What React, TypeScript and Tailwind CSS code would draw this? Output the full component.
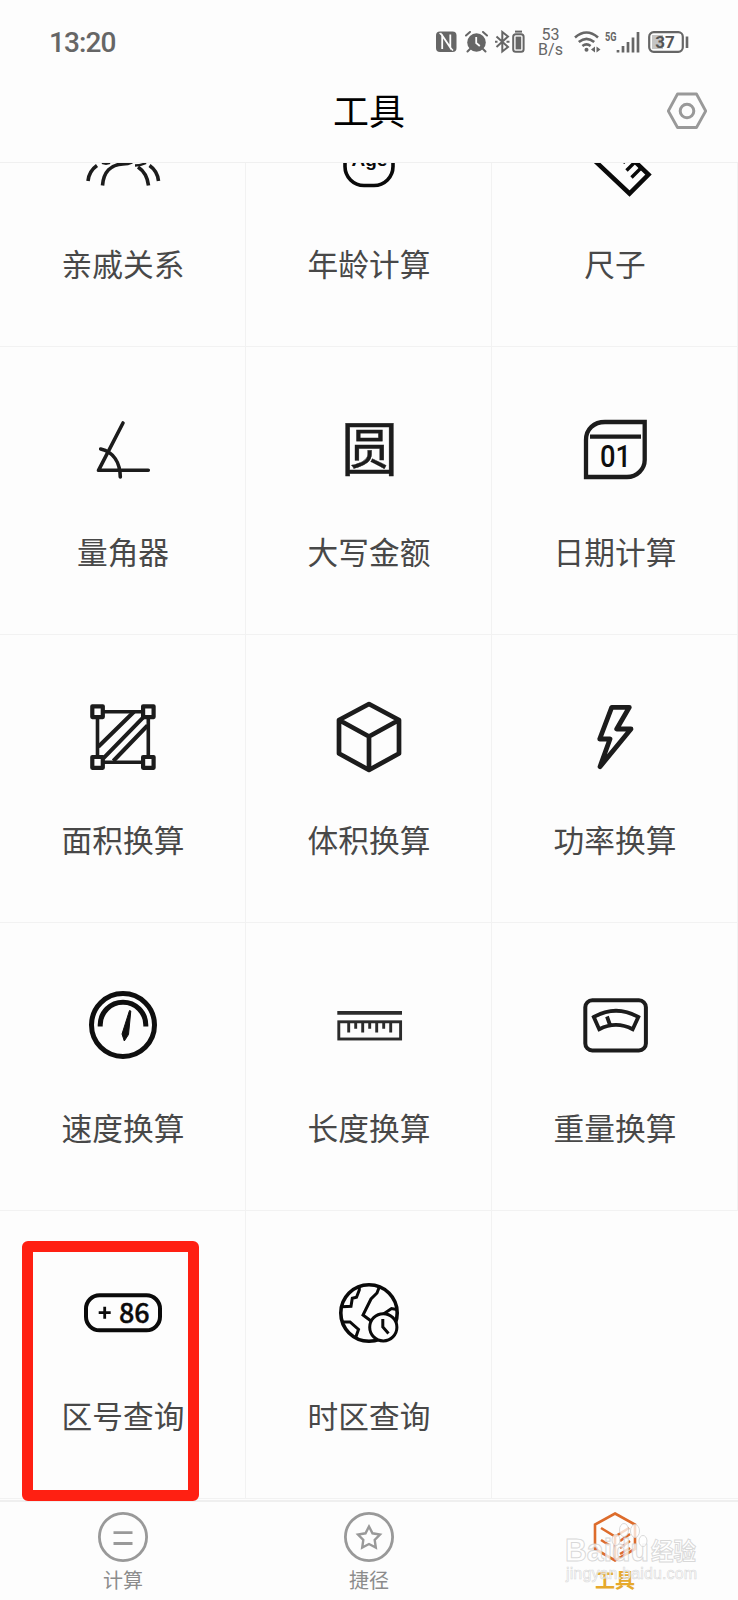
import type { ReactNode } from 'react';

const SANS = "font-['Roboto','Noto_Sans_CJK_SC',sans-serif]";

function Icon({ children, color = '#1c1c1c', width = 4 }: { children: ReactNode; color?: string; width?: number }) {
  return (
    <svg width="90" height="90" viewBox="0 0 90 90" fill="none" stroke={color} strokeWidth={width}>
      {children}
    </svg>
  );
}

const FamilyIcon = () => (
  <Icon width={3.6}>
    <path d="M10 64 Q11 54 19 48.5 M80.5 64 Q79.5 54 71.5 48.5" />
    <path d="M24.5 68.5 C25.5 55 33 47.5 45 47 Q50 47 54 45 M70.5 68.5 Q69 56 60 50" />
    <path d="M24 46 q4 1.5 8 0 M57 48.5 q6 0 11-2.5" strokeWidth="2.4" />
  </Icon>
);

const AgeIcon = () => (
  <Icon color="#0a0a0a" width={3.6}>
    <rect x="21" y="20" width="48" height="48.5" rx="19" />
    <text x="45.5" y="49" textAnchor="middle" fill="#0a0a0a" stroke="none" className="font-['Liberation_Sans',sans-serif] text-[19px] font-bold">
      Age
    </text>
  </Icon>
);

const SetSquareIcon = () => (
  <Icon color="#0a0a0a" width={4.5}>
    <path d="M15 34.5 L59.5 76.5 L78.5 57.5 L56 36" />
    <path d="M71.5 50.5 L61.5 60.5 M65.5 44.5 L56.5 53.5 M59 39 L53 46" strokeWidth="3.4" />
  </Icon>
);

const AngleIcon = () => (
  <Icon width={3.6}>
    <path d="M45 18 L20.5 65.3 H70.3 M22.7 44 C36 47 42 58 42.3 72" strokeLinecap="round" strokeLinejoin="round" />
  </Icon>
);

const YuanIcon = () => (
  <Icon>
    <text x="17" y="66" textLength="57" lengthAdjust="spacingAndGlyphs" fill="#1c1c1c" stroke="#1c1c1c" strokeWidth="0.4" className="font-['Noto_Sans_CJK_SC',sans-serif] text-[59px]">
      圆
    </text>
  </Icon>
);

const DateIcon = () => (
  <Icon width={4.3}>
    <path d="M16 72 V35 C16 24 24 17 35 17 H74.7 V55 C74.7 64 67 72 57 72 Z" />
    <path d="M20 31.7 H71" />
    <text x="45.5" y="61.5" textAnchor="middle" textLength="31" lengthAdjust="spacingAndGlyphs" fill="#0f0f0f" stroke="none" className="font-['Roboto',sans-serif] text-[31px] font-medium">
      01
    </text>
  </Icon>
);

const AreaIcon = () => (
  <Icon width={3.6}>
    <path d="M26 18.7 H64 M26 69.3 H64 M19.5 25 V63 M70.3 25 V63" />
    <path d="M20.3 53.7 L56 18.7 M25.3 65.3 L66 23.7 M35.3 68 L69.5 32.5" strokeWidth="4" />
    <g strokeWidth="4.2" strokeLinejoin="round">
      <rect x="14.3" y="13.3" width="10.5" height="10.8" />
      <rect x="65.1" y="13.3" width="10.5" height="10.8" />
      <rect x="14.3" y="64" width="10.5" height="10.8" />
      <rect x="65.1" y="64" width="10.5" height="10.8" />
    </g>
  </Icon>
);

const CubeIcon = () => (
  <Icon width={4.7}>
    <path d="M45 11 L75 27 V60.5 L45 77 L15 60.5 V27 Z M15 27 L45 43.5 L75 27 M45 43.5 V77" strokeLinejoin="round" />
  </Icon>
);

const BoltIcon = () => (
  <Icon width={4.8}>
    <path d="M41.7 14.3 H59.3 L46.7 36 H61 L30 73.7 L40 46 H29.7 Z" strokeLinejoin="round" />
  </Icon>
);

const SpeedIcon = () => (
  <Icon color="#0f0f0f" width={5}>
    <circle cx="45" cy="44" r="31.5" />
    <path d="M22.2 45.5 V44 A22.8 22.8 0 0 1 67.8 44 V45.5" />
    <path d="M51.5 29.5 L44 53 L46.3 60 L50.5 53.5 L52.8 30 Z" fill="#0f0f0f" strokeWidth="1" />
  </Icon>
);

const LengthIcon = () => (
  <Icon color="#2b2b2b" width={2.9}>
    <path d="M13.3 31.8 H78" strokeWidth="3.8" />
    <rect x="14.8" y="40.8" width="61.8" height="17.2" />
    <path d="M24.7 41 V51.5 M31.7 41 V47.7 M38.7 41 V51.5 M45.7 41 V47.7 M52.7 41 V51.5 M59.7 41 V47.7 M66.7 41 V51.5" />
  </Icon>
);

const WeightIcon = () => (
  <Icon>
    <rect x="15.3" y="19.3" width="60.6" height="50.2" rx="7" />
    <path d="M23.8 36 Q46 23.5 68.3 36 L62.7 48.2 Q46 39.5 29.2 48.2 Z M37 35.5 L40 44" strokeWidth="3.8" />
  </Icon>
);

const AreaCodeIcon = () => (
  <Icon color="#0a0a0a">
    <rect x="8" y="26.3" width="74" height="35" rx="13.5" />
    <path d="M20.7 43.7 H32.7 M26.7 37.7 V49.7" strokeWidth="2.8" />
    <text x="56.3" y="54" textAnchor="middle" fill="#0a0a0a" stroke="#0a0a0a" strokeWidth="0.4" className="font-['Noto_Sans_CJK_SC',sans-serif] text-[27px] font-medium">
      86
    </text>
  </Icon>
);

const TimeZoneIcon = () => (
  <Icon color="#0a0a0a" width={3}>
    <circle cx="45" cy="44" r="28.2" strokeWidth="3.6" />
    <path d="M35.3 17 V21 L32.5 28.3 L28.3 29.3 L27 37.3 L18 37.8 M18 53 H26 L34.5 60.5 L31.5 69" />
    <path d="M55.3 18 L53 24 L47 30 L39 46 L47 52 M58 46 L67.5 39.5 L73 40.5" />
    <circle cx="59.3" cy="58.3" r="13.6" fill="#fdfdfd" />
    <path d="M58.8 50 V58 L64.5 64.5" />
  </Icon>
);

const tools = [
  { label: '亲戚关系', icon: <FamilyIcon /> },
  { label: '年龄计算', icon: <AgeIcon /> },
  { label: '尺子', icon: <SetSquareIcon /> },
  { label: '量角器', icon: <AngleIcon /> },
  { label: '大写金额', icon: <YuanIcon /> },
  { label: '日期计算', icon: <DateIcon /> },
  { label: '面积换算', icon: <AreaIcon /> },
  { label: '体积换算', icon: <CubeIcon /> },
  { label: '功率换算', icon: <BoltIcon /> },
  { label: '速度换算', icon: <SpeedIcon /> },
  { label: '长度换算', icon: <LengthIcon /> },
  { label: '重量换算', icon: <WeightIcon /> },
  { label: '区号查询', icon: <AreaCodeIcon /> },
  { label: '时区查询', icon: <TimeZoneIcon /> },
  { label: '', icon: null },
];

function StatusBar() {
  return (
    <div className="flex h-[84px] items-center pr-[49px] pl-[49px] text-[#666]">
      <span className="pt-[2px] text-[28px] leading-none font-medium tracking-[-0.9px]">13:20</span>

      <div className="ml-auto flex items-center">
        {/* NFC */}
        <svg width="21" height="22" viewBox="0 0 21 22" className="mr-[8px]">
          <rect x="0" y="0.5" width="20.5" height="20.5" rx="4" fill="#666" />
          <path d="M6.2 18 V4.5 L14.3 16.5 V3.5" fill="none" stroke="#fdfdfd" strokeWidth="1.8" />
          <path d="M3.6 2 L6.2 4.5 M14.3 16.5 L17 19.5" stroke="#fdfdfd" strokeWidth="1.4" />
        </svg>
        {/* Alarm */}
        <svg width="23" height="22" viewBox="0 0 23 22" className="mr-[7px]">
          <circle cx="11.5" cy="11.5" r="9.3" fill="#666" />
          <path d="M1 4.5 L5 1 M22 4.5 L18 1 M5 18 L2.5 20.5 M18 18 L20.5 20.5" stroke="#666" strokeWidth="2" strokeLinecap="round" />
          <path d="M11.2 6 V12 L14.8 15" stroke="#fdfdfd" strokeWidth="1.8" fill="none" />
        </svg>
        {/* Bluetooth device with its battery */}
        <svg width="30" height="24" viewBox="0 0 30 24" className="mr-[13px]" fill="none" stroke="#666" strokeWidth="2">
          <path d="M1.5 6.5 L13 17 L7.3 21.5 V2 L13 6.5 L1.5 17" />
          <path d="M0 11.8 H2.5 M11.5 11.8 H14.5" />
          <rect x="18.2" y="4.2" width="10.4" height="17.6" rx="2.5" />
          <path d="M20 1.6 H27" />
          <rect x="20.6" y="6.6" width="5.6" height="12.8" fill="#666" stroke="none" />
        </svg>
        <div className="mr-[11px] flex w-[25px] flex-col items-center text-[16px] leading-[15px]">
          <span>53</span>
          <span>B/s</span>
        </div>
        {/* Wifi */}
        <svg width="27" height="22" viewBox="0 0 27 22" className="mr-[4px]" fill="none" stroke="#666" strokeWidth="2.6">
          <path d="M1 6.5 Q12.5 -3.5 24 6.5 M4.8 11 Q12.5 4.6 20.2 11 M8.4 15 Q12.5 11.8 16.6 15" />
          <circle cx="12.5" cy="18.8" r="2" fill="#666" stroke="none" />
          <path d="M17 18.5 l4-3 v6 z M26.5 18.5 l-4-3 v6 z" fill="#666" stroke="none" />
        </svg>
        {/* Signal */}
        <svg width="35" height="26" viewBox="0 -2 35 26" className="mr-[8px]">
          <text x="0" y="9.5" fill="#666" textLength="11.5" lengthAdjust="spacingAndGlyphs" className="text-[12.5px] font-bold">
            5G
          </text>
          <path d="M13 19 V21.5 M18 15 V21.5 M23 11 V21.5 M28 6.5 V21.5 M33 1 V21.5" stroke="#666" strokeWidth="2.7" />
        </svg>
        {/* Battery */}
        <svg width="41" height="22" viewBox="0 0 41 22">
          <rect x="1.2" y="1.2" width="33.6" height="19.6" rx="4.5" fill="none" stroke="#666" strokeWidth="2.2" />
          <path d="M4 4 H15 V18 H4 Z" fill="#c4c4c4" />
          <path d="M39 5.5 V17" stroke="#666" strokeWidth="2.6" />
          <text x="17" y="17" textAnchor="middle" fill="#555" className="text-[17px] font-bold">
            37
          </text>
        </svg>
      </div>
    </div>
  );
}

function NavItem({ label, active = false, children }: { label: string; active?: boolean; children: ReactNode }) {
  return (
    <button className="flex flex-1 flex-col items-center pt-[10px]">
      <svg width="52" height="52" viewBox="0 0 52 52" fill="none" stroke="#999" strokeWidth="2.8">
        {children}
      </svg>
      <span className={`mt-[3px] text-[20px] leading-[28px] ${active ? 'font-bold text-[#e6a92c]' : 'text-[#8c8c8c]'}`}>{label}</span>
    </button>
  );
}

function Watermark() {
  return (
    <svg width="140" height="66" viewBox="0 0 140 66" className="absolute right-[36px] bottom-[12px]">
      <g fill="#ffffff" fillOpacity="0.75" stroke="#d2d2d2" strokeOpacity="0.85" strokeWidth="1">
        <text x="3" y="39" textLength="84" lengthAdjust="spacingAndGlyphs" className="font-['Liberation_Sans',sans-serif] text-[31px] font-bold">
          Baidu
        </text>
        <ellipse cx="54" cy="18" rx="4" ry="5.5" />
        <ellipse cx="62" cy="8" rx="4.5" ry="6.5" />
        <ellipse cx="73" cy="9" rx="4.5" ry="6.5" />
        <ellipse cx="81" cy="19" rx="4" ry="5.5" />
        <text x="89" y="38" textLength="45" lengthAdjust="spacingAndGlyphs" className="font-['Noto_Sans_CJK_SC',sans-serif] text-[24px] font-bold">
          经验
        </text>
        <text x="4" y="57" textLength="131" className="font-['Liberation_Sans',sans-serif] text-[16px]" strokeWidth="0.6">
          jingyan.baidu.com
        </text>
      </g>
    </svg>
  );
}

export default function App() {
  return (
    <div className={`relative flex h-[1600px] w-[738px] flex-col overflow-hidden bg-[#fdfdfd] ${SANS}`}>
      <StatusBar />

      <header className="grid h-[78px] grid-cols-3 items-center">
        <span />
        <h1 className="pb-[20px] text-center text-[36px] leading-[54px] text-black">工具</h1>
        <button className="mr-[30px] mb-[25px] justify-self-end" aria-label="设置">
          <svg width="42" height="40" viewBox="0 0 42 40" fill="none" stroke="#999" strokeWidth="2.8">
            <path d="M11.5 3 H30.5 L39.7 20 L30.5 36.5 H11.5 L2.3 20 Z" strokeLinejoin="round" />
            <circle cx="21" cy="20" r="6.8" strokeWidth="3" />
          </svg>
        </button>
      </header>

      {/* Tool grid, scrolled so that the first row is cut */}
      <main className="h-[1338px] overflow-hidden border-t border-[#f0f0f0]">
        <div className="-mt-[104px] grid grid-cols-3">
          {tools.map((tool, i) => (
            <div key={i} className="flex h-[288px] flex-col items-center border-r border-b border-[#f2f2f2] pt-[58px] last:border-r-0">
              {tool.icon}
              <span className="mt-[36px] pl-px text-[30.7px] leading-[46px] text-[#484848]">{tool.label}</span>
            </div>
          ))}
        </div>
      </main>

      <nav className="flex h-[100px] border-t-2 border-[#efefef]">
        <NavItem label="计算">
          <circle cx="26" cy="25" r="23.6" />
          <path d="M16.5 20.7 H35.5 M16.5 31.5 H35.5" />
        </NavItem>
        <NavItem label="捷径">
          <circle cx="26" cy="25" r="23.6" />
          <path d="M26 14.5 L29.5 21.3 L37 22.6 L31.7 28 L32.8 35.5 L26 32 L19.2 35.5 L20.3 28 L15 22.6 L22.5 21.3 Z" strokeWidth="2.4" />
        </NavItem>
        <NavItem label="工具" active>
          <g stroke="#dd6c2c" strokeWidth="2.6">
            <path d="M26 1.5 L46 12.5 V37 L26 48.5 L6 37 V12.5 Z" />
            <path d="M12 16 L26 24.5 L40 16 M12 28 L20 33 M26 24.5 V48 M31 29 L41 22 M31 36 L41 29 M31 42 L41 36" />
          </g>
        </NavItem>
      </nav>

      <Watermark />

      {/* Highlight over the area code tool */}
      <div className="absolute top-[1241px] left-[22px] h-[260px] w-[177px] rounded-[6px] border-[11px] border-[#ff2012]" />
    </div>
  );
}
